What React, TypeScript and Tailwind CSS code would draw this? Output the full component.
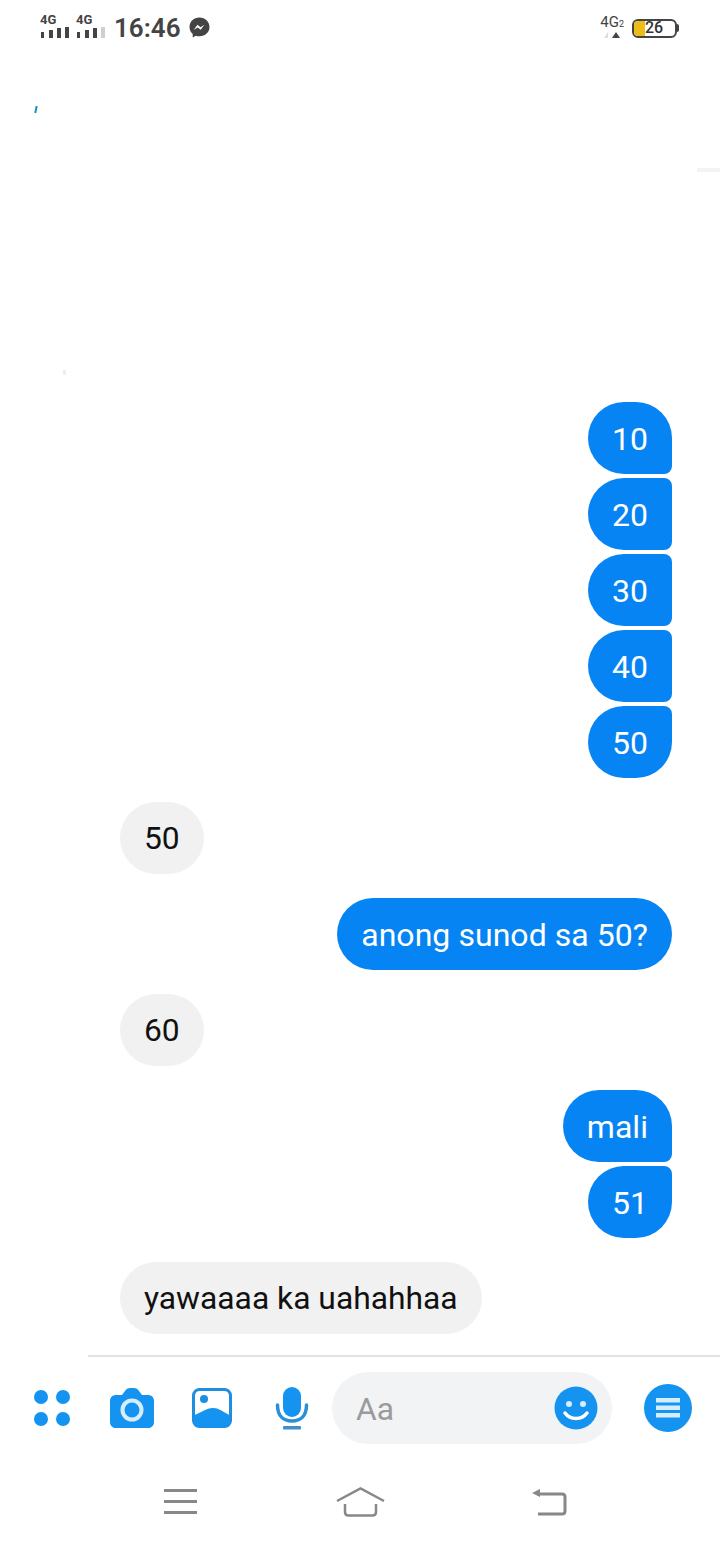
import React from 'react';

const ICON = '#1493f0';

const SignalBars = ({ last = '#444' }: { last?: string }) => (
  <svg width="31" height="13" viewBox="0 0 31 13">
    <rect x="1" y="6" width="3" height="6" fill="#444" />
    <rect x="9" y="4" width="4" height="8" fill="#444" />
    <rect x="17" y="2" width="4" height="10" fill="#444" />
    <rect x="25" y="1" width="4" height="11" fill={last} />
  </svg>
);

const Signal = ({ last }: { last?: string }) => (
  <div className="flex flex-col items-start -translate-y-[2px]">
    <span className="text-[13px] leading-[12px] font-bold text-[#444]">4G</span>
    <SignalBars last={last} />
  </div>
);

const Messenger = () => (
  <svg width="21" height="21" viewBox="0 0 21 21">
    <path d="M10.5 .5C4.8.5.5 4.6.5 10c0 2.9 1.2 5.300 3.200 7v3.500l3.200-1.800c1.100.4 2.300.6 3.600.6 5.700 0 10-4.100 10-9.300S16.200.5 10.500.5z" fill="#444" />
    <path d="M4.800 12.800l3.700-5 3 2.400 3.900-2.400-3.700 5-3-2.400z" fill="#fff" />
  </svg>
);

const StatusBar = () => (
  <div className="h-[56px] shrink-0 flex items-center pl-[40px] pr-[41px]">
    <Signal />
    <div className="w-[5px]" />
    <Signal last="#cfcfcf" />
    <span className="ml-[7px] text-[26px] leading-none font-semibold text-[#444]">16:46</span>
    <div className="ml-[8px] -translate-y-[1px]">
      <Messenger />
    </div>
    <div className="ml-auto flex items-center gap-[8px]">
      <div className="flex flex-col items-center -translate-y-[1px]">
        <span className="text-[15px] leading-[14px] text-[#444]">
          4G<span className="text-[9px]">2</span>
        </span>
        <svg width="20" height="8" viewBox="0 0 20 8">
          <path d="M2 7l4-6v6z" fill="#ddd" />
          <path d="M10 7l4-6 4 6z" fill="#444" />
        </svg>
      </div>
      <div className="flex items-center">
        <div className="w-[45px] h-[19px] rounded-[6px] border-2 border-[#444] overflow-hidden flex items-center">
          <div className="w-[11px] h-full bg-[#eebc1a]" />
          <span className="text-[16px] leading-none font-medium text-[#333]">26</span>
        </div>
        <div className="w-[2px] h-[8px] bg-[#444] rounded-r-sm" />
      </div>
    </div>
  </div>
);

type Corner = 'single' | 'first' | 'middle' | 'last';

const cornerClass: Record<Corner, string> = {
  single: 'rounded-[36px]',
  first: 'rounded-l-[36px] rounded-tr-[36px] rounded-br-[8px]',
  middle: 'rounded-l-[36px] rounded-r-[8px]',
  last: 'rounded-l-[36px] rounded-tr-[8px] rounded-br-[36px]',
};

const Sent = ({ text, corner = 'single' }: { text: string; corner?: Corner }) => (
  <div className={`self-end h-[72px] px-[24px] pt-[2px] flex items-center bg-[#0784f3] text-white text-[32px] tracking-[0.05px] ${cornerClass[corner]}`}>
    {text}
  </div>
);

const Received = ({ text }: { text: string }) => (
  <div className="self-start h-[72px] px-[24px] pt-[2px] flex items-center rounded-[36px] bg-[#f1f1f1] text-[#111] text-[31.8px]">
    {text}
  </div>
);

const Group = ({ children }: { children: React.ReactNode }) => (
  <div className="flex flex-col gap-[4px]">{children}</div>
);

const Messages = () => (
  <div className="relative flex-1 flex flex-col justify-end gap-[24px] pl-[120px] pr-[48px] pb-[21px]">
    <div className="absolute left-[35px] top-[50px] w-[2px] h-[7px] bg-[#1c8fc4] rotate-12" />
    <div className="absolute right-0 top-[112px] w-[23px] h-[4px] bg-[#f3f3f3]" />
    <div className="absolute left-[63px] top-[314px] w-[3px] h-[5px] bg-[#eeeeee]" />
    <Group>
      <Sent text="10" corner="first" />
      <Sent text="20" corner="middle" />
      <Sent text="30" corner="middle" />
      <Sent text="40" corner="middle" />
      <Sent text="50" corner="last" />
    </Group>
    <Received text="50" />
    <Sent text="anong sunod sa 50?" />
    <Received text="60" />
    <Group>
      <Sent text="mali" corner="first" />
      <Sent text="51" corner="last" />
    </Group>
    <Received text="yawaaaa ka uahahhaa" />
  </div>
);

const Composer = () => (
  <div className="shrink-0">
    <div className="ml-[88px] h-[2px] bg-[#e2e2e2]" />
    <div className="h-[102px] flex items-center pl-[34px]">
      <svg width="36" height="36" viewBox="0 0 36 36" fill={ICON}>
        <circle cx="7" cy="7" r="7" />
        <circle cx="29" cy="7" r="7" />
        <circle cx="7" cy="29" r="7" />
        <circle cx="29" cy="29" r="7" />
      </svg>
      <svg className="ml-[40px]" width="44" height="40" viewBox="0 0 44 40">
        <path d="M6 7h6l3-4c1-2 3-3 5-3h4c2 0 4 1 5 3l3 4h6c3 0 6 2 6 6v21c0 4-3 6-6 6H6c-3 0-6-2-6-6V13c0-4 3-6 6-6z" fill={ICON} />
        <circle cx="22" cy="22" r="9.500" fill="none" stroke="#d6eefc" strokeWidth="4" />
      </svg>
      <svg className="ml-[38px]" width="40" height="40" viewBox="0 0 40 40">
        <rect x="1.500" y="1.500" width="37" height="37" rx="6" fill="#fff" stroke="#1d8ee0" strokeWidth="3" />
        <circle cx="12" cy="11" r="4" fill="#1d8ee0" />
        <path d="M2 27c7-2 12-7 19-7s11 5 17 7v8c0 3-2 4-5 4H7c-3 0-5-1-5-4z" fill={ICON} />
      </svg>
      <svg className="ml-[43px]" width="34" height="44" viewBox="0 0 34 44">
        <rect x="8" y="1" width="18" height="30" rx="9" fill={ICON} />
        <path d="M2.500 19c0 11 6 16 14.500 16s14.500-5 14.500-16" fill="none" stroke="#2b8fd8" strokeWidth="3.500" strokeLinecap="round" />
        <rect x="8" y="40" width="18" height="3.500" rx="1" fill="#3f8fc8" />
      </svg>
      <div className="ml-[23px] w-[280px] h-[72px] rounded-[36px] bg-[#f2f3f5] flex items-center justify-between pl-[24px] pr-[14px]">
        <span className="pt-[3px] text-[31.8px] text-[#9b9b9b]">Aa</span>
        <svg width="44" height="44" viewBox="0 0 44 44">
          <circle cx="22" cy="22" r="21.500" fill={ICON} />
          <circle cx="15" cy="18" r="3" fill="#d6eefc" />
          <circle cx="29" cy="18" r="3" fill="#d6eefc" />
          <path d="M11 27c3 4 7 5.500 11 5.500S30 31 33 27" fill="none" stroke="#fff" strokeWidth="3.500" strokeLinecap="round" />
        </svg>
      </div>
      <svg className="ml-[32px]" width="48" height="48" viewBox="0 0 48 48">
        <circle cx="24" cy="24" r="24" fill={ICON} />
        <rect x="12" y="14" width="24" height="4.500" fill="#d6eefc" />
        <rect x="12" y="21.500" width="24" height="4.500" fill="#d6eefc" />
        <rect x="12" y="29" width="24" height="4.500" fill="#d6eefc" />
      </svg>
    </div>
  </div>
);

const NavBar = () => (
  <div className="h-[85px] shrink-0 flex items-center pl-[163px] pt-[1px]">
    <svg width="35" height="28" viewBox="0 0 35 28" stroke="#888" strokeWidth="3">
      <path d="M1 2.500h33M1 13.500h33M1 24.500h33" />
    </svg>
    <svg className="ml-[138px]" width="49" height="30" viewBox="0 0 49 30" fill="none" stroke="#888" strokeWidth="2.500">
      <path d="M1 14L24.500 1.500 48 14" />
      <path d="M9 17v8c0 2.500 1.500 3.500 3.500 3.500h24c2 0 3.500-1 3.500-3.500v-8" />
    </svg>
    <svg className="ml-[147px]" width="35" height="28" viewBox="0 0 35 28" fill="none" stroke="#888" strokeWidth="3">
      <path d="M5 6h25c2 0 3 1 3 3v14c0 2-1 3-3 3H6" />
      <path d="M0 5l8-4v8z" fill="#888" stroke="none" />
    </svg>
  </div>
);

export default function App() {
  return (
    <div className="w-[720px] h-[1544px] bg-white flex flex-col overflow-hidden font-['Roboto',sans-serif]">
      <StatusBar />
      <Messages />
      <Composer />
      <NavBar />
    </div>
  );
}
